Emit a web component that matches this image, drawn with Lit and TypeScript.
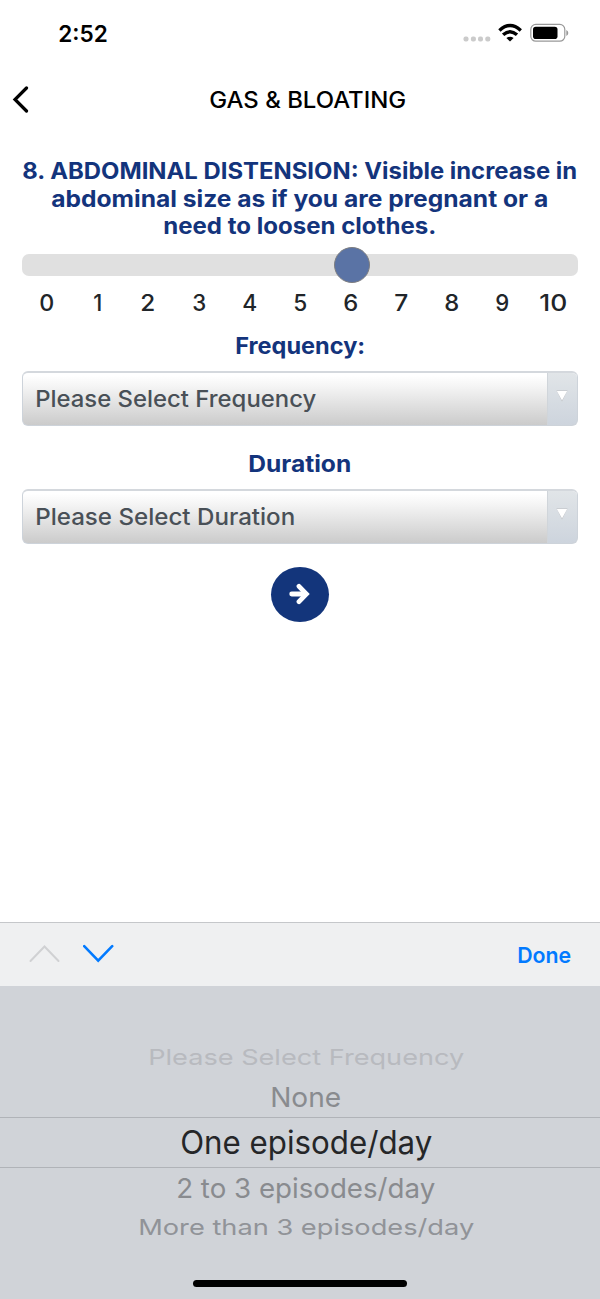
import { LitElement, html, css } from "lit";
import { customElement, property } from "lit/decorators.js";

/** One line of text set to an exact measure, with its baseline `base` px below the top. */
@customElement("text-line")
class TextLine extends LitElement {
  @property() text = "";
  @property({ type: Number }) w = 100;
  @property({ type: Number }) h = 28;
  @property({ type: Number }) base = 20;
  static styles = css`
    :host { display: block; flex: none; }
    svg { display: block; overflow: visible; fill: currentColor; }
  `;
  render() {
    return html`<svg width=${this.w} height=${this.h}>
      <text x="-0.8" y=${this.base} textLength=${this.w + 1} lengthAdjust="spacingAndGlyphs">${this.text}</text>
    </svg>`;
  }
}

@customElement("select-box")
class SelectBox extends LitElement {
  @property() label = "";
  @property({ type: Number }) w = 280;
  static styles = css`
    :host { display: flex; box-sizing: border-box; height: 55px; margin: 0 22px; border: 1px solid #cdd3da; border-top: 2px solid #d4d8dd; border-radius: 6px; overflow: hidden; background: linear-gradient(#fff 5%, #f5f5f5 25%, #cbcbcb); }
    .label { flex: 1; padding: 12px 0 0 13px; font-size: 23px; font-weight: 500; color: #495057; }
    .arrow { width: 30px; flex: none; display: flex; justify-content: center; padding: 16px 2px 0 0; box-sizing: border-box; background: linear-gradient(#e1e5e8, #cdd4dd); border-left: 1px solid #d0d5da; }
    svg { display: block; }
  `;
  render() {
    return html`<div class="label"><text-line text=${this.label} w=${this.w} h="30" base="22.4"></text-line></div>
      <div class="arrow"><svg width="14" height="14" viewBox="0 0 14 14"><path d="M1.5 1.4H12.5L7 12.6Z" fill="#b9bcc0"/><path d="M1.8 2H12.2L7 11.4Z" fill="#fff"/></svg></div>`;
  }
}

@customElement("app-root")
class AppRoot extends LitElement {
  static styles = css`
    :host { display: flex; flex-direction: column; height: 1299px; width: 600px; background: #fff; font-family: Inter, sans-serif; overflow: hidden; color: #000; }
    .status { height: 66px; flex: none; display: flex; padding: 0 31px 0 58.8px; box-sizing: border-box; justify-content: space-between; }
    .time { font-size: 22.5px; font-weight: 600; padding-top: 20px; }
    .icons { display: block; padding-top: 18px; }
    .nav { height: 66px; flex: none; display: flex; align-items: center; padding-left: 12px; box-sizing: border-box; }
    .title { font-size: 22.5px; font-weight: 500; margin-left: 181px; }
    .question { flex: none; height: 121px; padding-top: 24px; box-sizing: border-box; display: flex; flex-direction: column; align-items: center; color: #13347c; font-size: 22.5px; font-weight: 650; }
    .track { flex: none; height: 22px; margin: 0.6px 22px 0; border-radius: 7px; background: #e0e0e0; display: flex; align-items: center; padding-left: 312px; }
    .thumb { width: 34px; height: 34px; border: 1px solid #7e7e80; border-radius: 50%; background: #5a73a5; }
    .scale { flex: none; height: 51.4px; padding: 13px 20px 0 22px; display: grid; grid-template-columns: repeat(11, 50.6px); justify-items: center; box-sizing: border-box; color: #212529; font-size: 22.5px; font-weight: 500; }
    .heading { flex: none; height: 44px; display: flex; justify-content: center; color: #13347c; font-size: 22.5px; font-weight: 650; }
    .duration { height: 63px; padding-top: 19px; box-sizing: border-box; }
    .go { flex: none; width: 58px; height: 55px; margin: 23px auto 0; border-radius: 29px / 27.5px; background: #13357b; display: flex; align-items: center; justify-content: center; }
    .gap { flex: 1; }
    .bar { flex: none; height: 64px; display: flex; align-items: center; border-top: 1px solid #c5c7ca; background: #eff0f1; box-sizing: border-box; padding: 0 29px 2px 28.5px; }
    .bar svg { margin-right: 23px; }
    .done { margin-left: auto; color: #027aff; font-size: 22px; font-weight: 600; }
    .wheel { flex: none; height: 313px; background: #d0d3d8; display: flex; flex-direction: column; align-items: center; box-sizing: border-box; padding-top: 57px; color: #898b8f; }
    .row { padding-left: 12px; }
    .far { color: #b8babf; font-size: 22px; }
    .near { font-size: 27.5px; }
    .pick { width: 600px; height: 51px; box-sizing: border-box; border-top: 1px solid #b0b3b8; border-bottom: 1px solid #b0b3b8; display: flex; justify-content: center; padding-left: 12px; color: #252628; font-size: 32px; }
    .low { font-size: 22px; color: #919398; }
    .home { width: 214px; height: 7px; border-radius: 4px; background: #000; margin-top: auto; margin-bottom: 12px; }
  `;
  render() {
    return html`
      <div class="status">
        <text-line class="time" text="2:52" w="48.5" h="28" base="22"></text-line>
        <svg class="icons" width="106" height="30" viewBox="463 18 106 30">
          <g fill="#cbcbcb"><rect x="463.5" y="36.5" width="5" height="5" rx="2"/><rect x="470.9" y="36.5" width="5" height="5" rx="2"/><rect x="478" y="36.5" width="5" height="5" rx="2"/><rect x="485.3" y="36.5" width="5" height="5" rx="2"/></g>
          <g fill="none" stroke="#000" stroke-width="3.4"><path d="M499.4 30.4Q510 20.8 520.8 30.4"/><path d="M503.1 34.8Q510 28.6 517 34.8"/></g>
          <path d="M506.4 38.1Q510 35.4 513.6 38.1L510 41.5Z"/>
          <rect x="530.8" y="24.4" width="34" height="16.8" rx="5" fill="none" stroke="#999" stroke-width="1.2"/>
          <rect x="533" y="26.8" width="24.5" height="12.2" rx="2.8"/>
          <path d="M566.3 30Q568.3 31 568.3 33T566.3 36Z" fill="#999"/>
        </svg>
      </div>
      <div class="nav">
        <svg width="17" height="28" viewBox="0 0 17 28"><path d="M14.5 3L3 14.5L14.5 26" fill="none" stroke="#000" stroke-width="3.2" stroke-linecap="round"/></svg>
        <text-line class="title" text="GAS &amp; BLOATING" w="196" h="28" base="22.8"></text-line>
      </div>
      <div class="question">
        <text-line text="8. ABDOMINAL DISTENSION: Visible increase in" w="554" h="27.5" base="22.5"></text-line>
        <text-line text="abdominal size as if you are pregnant or a" w="496" h="27.5" base="22.6"></text-line>
        <text-line text="need to loosen clothes." w="272" h="27.5" base="22.5"></text-line>
      </div>
      <div class="track"><div class="thumb"></div></div>
      <div class="scale">
        ${[14, 8, 14, 13, 14, 13, 14, 13, 14, 13, 27].map((w, i) => html`<text-line text=${String(i)} w=${w} h="28" base="21.6"></text-line>`)}
      </div>
      <div class="heading"><text-line text="Frequency:" w="129" h="28" base="27"></text-line></div>
      <select-box label="Please Select Frequency" w="280"></select-box>
      <div class="heading duration"><text-line text="Duration" w="102" h="28" base="26.5"></text-line></div>
      <select-box label="Please Select Duration" w="259"></select-box>
      <div class="go">
        <svg width="22" height="22" viewBox="0 0 22 22" fill="none" stroke="#fff" stroke-width="4.8" stroke-linecap="round"><path d="M2.7 11H16"/><path d="M10 3.3L17.4 11L10 18.7"/></svg>
      </div>
      <div class="gap"></div>
      <div class="bar">
        <svg width="31" height="20" viewBox="0 0 31 20" fill="none" stroke="#d0d1d3" stroke-width="2" stroke-linecap="round"><path d="M1.5 17L15.5 2.5L29.5 17"/></svg>
        <svg width="31" height="20" viewBox="0 0 31 20" fill="none" stroke="#027aff" stroke-width="2.6" stroke-linecap="round"><path d="M1.2 2.2L15.2 16.6L29.2 2.2"/></svg>
        <text-line class="done" text="Done" w="53" h="28" base="23"></text-line>
      </div>
      <div class="wheel">
        <text-line class="row far" text="Please Select Frequency" w="315" h="34" base="22.3"></text-line>
        <text-line class="row near" text="None" w="70" h="40" base="30"></text-line>
        <div class="pick"><text-line text="One episode/day" w="251" h="49" base="36.3"></text-line></div>
        <text-line class="row near" text="2 to 3 episodes/day" w="258" h="40" base="30"></text-line>
        <text-line class="row low" text="More than 3 episodes/day" w="335" h="34" base="27"></text-line>
        <div class="home"></div>
      </div>`;
  }
}
